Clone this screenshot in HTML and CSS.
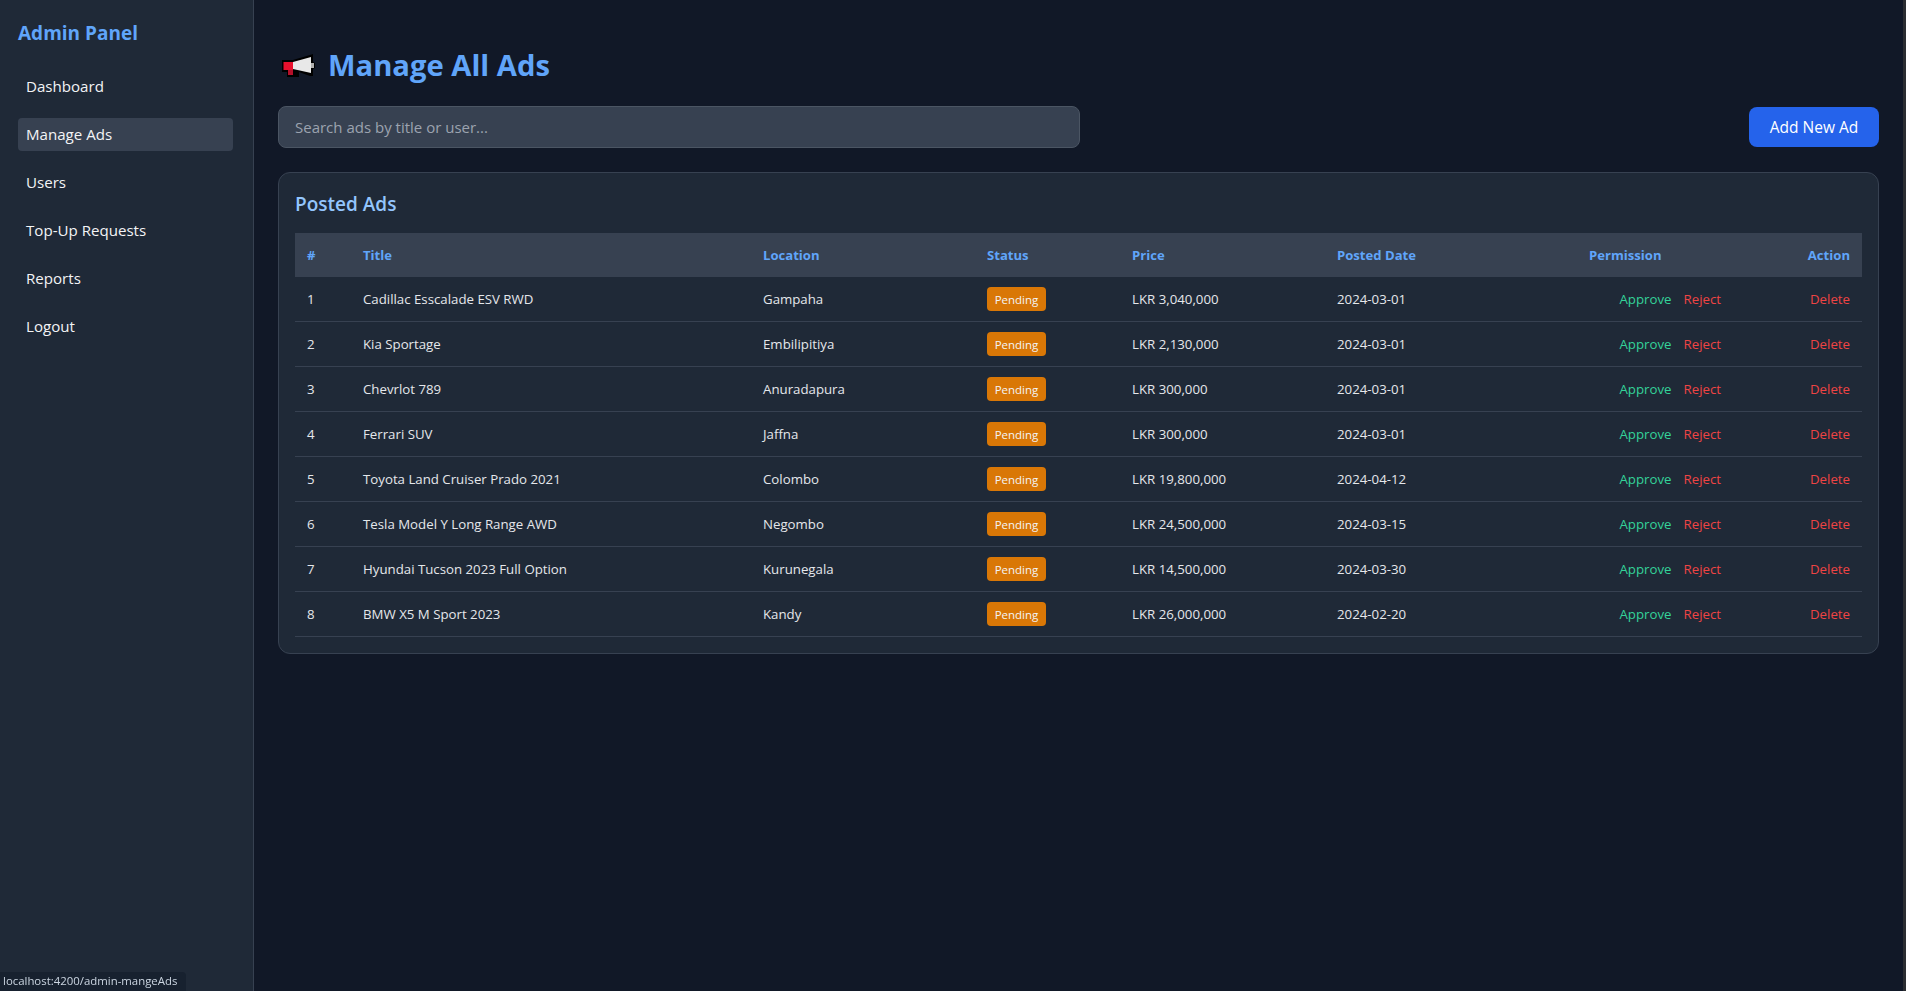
FILE: index.html
```html
<!DOCTYPE html>
<html lang="en">
<head>
    <meta charset="UTF-8">
    <title>Admin Panel</title>
    <link rel="stylesheet" href="styles.css">
</head>
<body>
    <div class="layout">
        <aside class="sidebar">
            <h2 class="brand">Admin Panel</h2>
            <nav class="side-nav">
                <a href="#">Dashboard</a>
                <a href="#" class="active">Manage Ads</a>
                <a href="#">Users</a>
                <a href="#">Top-Up Requests</a>
                <a href="#">Reports</a>
                <a href="#">Logout</a>
            </nav>
        </aside>

        <main class="content">
            <h1 class="page-title">
                <svg class="title-icon" width="33" height="23" viewBox="0 0 33 23">
                    <path d="M0 6h11L28 1l3-1v8l2 1v5l-2 1v7h-3l-11-4v5H5v-5H0z" fill="#000"/>
                    <path d="M1.500 8H11v8H1.500z" fill="#e8112d"/>
                    <path d="M6 16h5v5H6z" fill="#b5102a"/>
                    <path d="M11 8l18-5v16l-18-4z" fill="#e8e8e8"/>
                    <path d="M29 9h3v5h-3z" fill="#b0b0b0"/>
                </svg>
                Manage All Ads
            </h1>

            <div class="toolbar">
                <input class="search" type="text" placeholder="Search ads by title or user...">
                <button class="add-btn">Add New Ad</button>
            </div>

            <section class="card">
                <h2 class="card-title">Posted Ads</h2>
                <table class="ads">
                    <colgroup>
                        <col class="c-num"><col class="c-title"><col class="c-loc"><col class="c-status">
                        <col class="c-price"><col class="c-date"><col class="c-perm"><col class="c-action">
                    </colgroup>
                    <thead>
                        <tr>
                            <th>#</th><th>Title</th><th>Location</th><th>Status</th>
                            <th>Price</th><th>Posted Date</th><th>Permission</th><th class="right">Action</th>
                        </tr>
                    </thead>
                    <tbody>
                        <tr>
                            <td>1</td><td>Cadillac Esscalade ESV RWD</td><td>Gampaha</td><td><span class="badge">Pending</span></td>
                            <td>LKR 3,040,000</td><td>2024-03-01</td>
                            <td class="right"><a class="approve" href="#">Approve</a><a class="reject" href="#">Reject</a></td>
                            <td class="right"><a class="delete" href="#">Delete</a></td>
                        </tr>
                        <tr>
                            <td>2</td><td>Kia Sportage</td><td>Embilipitiya</td><td><span class="badge">Pending</span></td>
                            <td>LKR 2,130,000</td><td>2024-03-01</td>
                            <td class="right"><a class="approve" href="#">Approve</a><a class="reject" href="#">Reject</a></td>
                            <td class="right"><a class="delete" href="#">Delete</a></td>
                        </tr>
                        <tr>
                            <td>3</td><td>Chevrlot 789</td><td>Anuradapura</td><td><span class="badge">Pending</span></td>
                            <td>LKR 300,000</td><td>2024-03-01</td>
                            <td class="right"><a class="approve" href="#">Approve</a><a class="reject" href="#">Reject</a></td>
                            <td class="right"><a class="delete" href="#">Delete</a></td>
                        </tr>
                        <tr>
                            <td>4</td><td>Ferrari SUV</td><td>Jaffna</td><td><span class="badge">Pending</span></td>
                            <td>LKR 300,000</td><td>2024-03-01</td>
                            <td class="right"><a class="approve" href="#">Approve</a><a class="reject" href="#">Reject</a></td>
                            <td class="right"><a class="delete" href="#">Delete</a></td>
                        </tr>
                        <tr>
                            <td>5</td><td>Toyota Land Cruiser Prado 2021</td><td>Colombo</td><td><span class="badge">Pending</span></td>
                            <td>LKR 19,800,000</td><td>2024-04-12</td>
                            <td class="right"><a class="approve" href="#">Approve</a><a class="reject" href="#">Reject</a></td>
                            <td class="right"><a class="delete" href="#">Delete</a></td>
                        </tr>
                        <tr>
                            <td>6</td><td>Tesla Model Y Long Range AWD</td><td>Negombo</td><td><span class="badge">Pending</span></td>
                            <td>LKR 24,500,000</td><td>2024-03-15</td>
                            <td class="right"><a class="approve" href="#">Approve</a><a class="reject" href="#">Reject</a></td>
                            <td class="right"><a class="delete" href="#">Delete</a></td>
                        </tr>
                        <tr>
                            <td>7</td><td>Hyundai Tucson 2023 Full Option</td><td>Kurunegala</td><td><span class="badge">Pending</span></td>
                            <td>LKR 14,500,000</td><td>2024-03-30</td>
                            <td class="right"><a class="approve" href="#">Approve</a><a class="reject" href="#">Reject</a></td>
                            <td class="right"><a class="delete" href="#">Delete</a></td>
                        </tr>
                        <tr>
                            <td>8</td><td>BMW X5 M Sport 2023</td><td>Kandy</td><td><span class="badge">Pending</span></td>
                            <td>LKR 26,000,000</td><td>2024-02-20</td>
                            <td class="right"><a class="approve" href="#">Approve</a><a class="reject" href="#">Reject</a></td>
                            <td class="right"><a class="delete" href="#">Delete</a></td>
                        </tr>
                    </tbody>
                </table>
            </section>
        </main>
    </div>

    <div class="status-url">localhost:4200/admin-mangeAds</div>
</body>
</html>
```

FILE: styles.css
```css
* {
    box-sizing: border-box;
}
html, body {
    height: 100%;
}
body {
    margin: 0;
    background-color: #111827;
    color: #e5e7eb;
    font-family: "Open Sans", "Noto Sans", sans-serif;
    overflow: hidden;
}
a {
    text-decoration: none;
}
.layout {
    display: flex;
    min-height: 100%;
    border-right: 3px solid #2b2d31;
}

/* sidebar */
.sidebar {
    width: 254px;
    flex-shrink: 0;
    background-color: #1f2937;
    border-right: 1px solid #374151;
    padding: 20px 20px 20px 18px;
}
.brand {
    margin: 0 0 23px;
    color: #60a5fa;
    font-size: 19px;
    line-height: 27px;
    font-weight: 700;
}
.side-nav {
    display: flex;
    flex-direction: column;
    gap: 15px;
}
.side-nav a {
    display: block;
    height: 33px;
    padding: 0 8px;
    border-radius: 4px;
    color: #f3f4f6;
    font-size: 15.100px;
    line-height: 33px;
}
.side-nav a.active {
    background-color: #374151;
}

/* main */
.content {
    flex: 1;
    padding: 46px 24px 24px;
}
.page-title {
    display: flex;
    align-items: center;
    gap: 13px;
    margin: 0 0 21px;
    color: #60a5fa;
    font-size: 29.200px;
    line-height: 39px;
    font-weight: 700;
}
.title-icon {
    margin-left: 4px;
}
.toolbar {
    display: flex;
    justify-content: space-between;
    align-items: center;
    margin-bottom: 24px;
}
.search {
    width: 802px;
    height: 42px;
    padding: 0 16px;
    background-color: #374151;
    border: 1px solid #4b5563;
    border-radius: 8px;
    color: #e5e7eb;
    font-family: inherit;
    font-size: 15px;
}
.search::placeholder {
    color: #9ca3af;
}
.add-btn {
    width: 130px;
    height: 40px;
    background-color: #2563eb;
    border: 0;
    border-radius: 8px;
    color: #fff;
    font-family: inherit;
    font-size: 15.500px;
}

/* card and table */
.card {
    background-color: #1f2937;
    border: 1px solid #374151;
    border-radius: 12px;
    padding: 16px;
}
.card-title {
    margin: 0 0 14px;
    color: #93c5fd;
    font-size: 19px;
    line-height: 30px;
    font-weight: 600;
}
.ads {
    width: 100%;
    table-layout: fixed;
    border-collapse: separate;
    border-spacing: 0;
    font-size: 13.250px;
}
.c-num { width: 56px; }
.c-title { width: 400px; }
.c-loc { width: 224px; }
.c-status { width: 145px; }
.c-price { width: 205px; }
.c-date { width: 252px; }
.c-perm { width: 156px; }
.ads th {
    height: 44px;
    padding: 0 12px;
    background-color: #374151;
    color: #60a5fa;
    text-align: left;
    font-size: 13.100px;
    font-weight: 700;
}
.ads td {
    height: 45px;
    padding: 0 12px;
    border-bottom: 1px solid #374151;
    color: #e5e7eb;
}
.ads .right {
    text-align: right;
}
.badge {
    display: inline-block;
    width: 59px;
    height: 24px;
    background-color: #d97706;
    border-radius: 4px;
    color: #f3f4f6;
    text-align: center;
    font-size: 11.500px;
    line-height: 25px;
}
.approve {
    color: #34d399;
}
.reject {
    color: #ef4444;
    margin-left: 12px;
}
.delete {
    color: #ef4444;
}

/* browser status bubble */
.status-url {
    position: fixed;
    left: 0;
    bottom: 0;
    padding: 1px 9px 2px 3px;
    background-color: #17212f;
    border-top-right-radius: 4px;
    color: #cbd5e1;
    font-size: 11.400px;
    line-height: 16px;
}
```
